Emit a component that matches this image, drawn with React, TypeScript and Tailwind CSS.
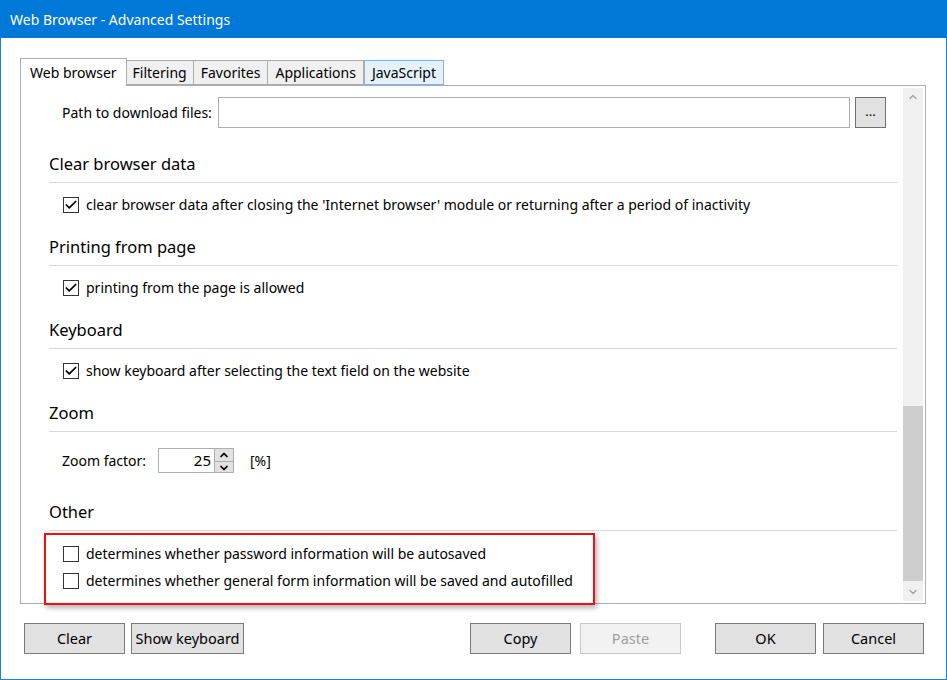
import { Check, ChevronUp, ChevronDown } from 'lucide-react'

const font = { fontFamily: '"Noto Sans", "Open Sans", sans-serif' }

function CheckBox({ checked, label }: { checked?: boolean; label: string }) {
  return (
    <div className="flex items-center h-[24px] gap-[7px] ml-[14px]">
      <span className="w-[16px] h-[16px] border border-[#333333] bg-white flex items-center justify-center">
        {checked && <Check size={14} strokeWidth={3} color="#000" />}
      </span>
      <span className="text-[14px] text-black leading-none">{label}</span>
    </div>
  )
}

function Section({ title, children, rowGap = 'mt-[10px]' }: { title: string; children: React.ReactNode; rowGap?: string }) {
  return (
    <div>
      <div className="h-[26px] flex items-center text-[16.5px] text-black">{title}</div>
      <div className="mt-[5px] h-px bg-[#d9d9d9]" />
      <div className={rowGap}>{children}</div>
    </div>
  )
}

function Button({ label, w, disabled }: { label: string; w: string; disabled?: boolean }) {
  return (
    <button
      className={`${w} h-[31px] text-[14.5px] border ${
        disabled ? 'bg-[#f2f2f2] border-[#c8c8c8] text-[#a0a0a0]' : 'bg-[#e1e1e1] border-[#7a7a7a] text-black'
      }`}
    >
      {label}
    </button>
  )
}

export default function App() {
  return (
    <div className="w-[947px] h-[680px] bg-white border border-[#1883d7] border-t-0 flex flex-col" style={font}>
      <div className="h-[38px] -mx-px bg-[#0078d7] text-white text-[14px] flex items-center pl-[10px]">
        Web Browser - Advanced Settings
      </div>

      <div className="ml-[19px] mr-[20px] mt-[19px] flex flex-col">
        <div className="flex items-end h-[28px] text-[14px] text-black">
          <div className="h-[28px] px-[9px] flex items-center bg-white border border-[#adadad] border-b-0 relative z-10 -mb-px pb-px">
            Web browser
          </div>
          <div className="h-[25px] px-[6px] flex items-center bg-[#f0f0f0] border border-[#adadad] border-l-0">Filtering</div>
          <div className="h-[25px] px-[7px] flex items-center bg-[#f0f0f0] border border-[#adadad] border-l-0">Favorites</div>
          <div className="h-[25px] px-[7px] flex items-center bg-[#f0f0f0] border border-[#adadad] border-l-0">Applications</div>
          <div className="h-[25px] px-[7px] flex items-center bg-[#e5f1fb] border border-[#7eb4ea] border-l-[#adadad]">JavaScript</div>
        </div>

        <div className="h-[519px] border border-[#adadad] flex">
          <div className="flex-1 pl-[28px] pr-[6px] pt-[11px]">
            <div className="flex items-center h-[31px] ml-[13px] text-[14px]">
              <span className="w-[156px]">Path to download files:</span>
              <div className="w-[632px] h-[31px] border border-[#adadad] bg-white" />
              <div className="ml-[5px] w-[31px] h-[31px] border border-[#707070] bg-[#e1e1e1] flex items-center justify-center text-[13px] leading-none pb-[2px]">
                ...
              </div>
            </div>

            <div className="mt-[23px] flex flex-col gap-[17px]">
              <Section title="Clear browser data">
                <CheckBox checked label="clear browser data after closing the 'Internet browser' module or returning after a period of inactivity" />
              </Section>
              <Section title="Printing from page">
                <CheckBox checked label="printing from the page is allowed" />
              </Section>
              <Section title="Keyboard">
                <CheckBox checked label="show keyboard after selecting the text field on the website" />
              </Section>
              <Section title="Zoom" rowGap="mt-[16px]">
                <div className="flex items-center h-[24px] ml-[13px] text-[14px]">
                  <span className="w-[96px]">Zoom factor:</span>
                  <div className="w-[76px] h-[25px] border border-[#adadad] flex">
                    <span className="flex-1 text-right pr-[3px] text-[15px] leading-[23px]">25</span>
                    <div className="w-[19px] flex flex-col border-l border-[#adadad] bg-[#e1e1e1]">
                      <span className="flex-1 flex items-center justify-center border-b border-[#adadad]">
                        <ChevronUp size={12} strokeWidth={3.5} color="#000" />
                      </span>
                      <span className="flex-1 flex items-center justify-center">
                        <ChevronDown size={12} strokeWidth={3.5} color="#000" />
                      </span>
                    </div>
                  </div>
                  <span className="ml-[16px]">[%]</span>
                </div>
              </Section>
              <div className="mt-[10px]">
                <div className="h-[26px] flex items-center text-[16.5px] text-black">Other</div>
                <div className="mt-[5px] h-px bg-[#d9d9d9]" />
                <div className="-ml-[5px] mt-[2px] w-[551px] h-[72px] border-2 border-[#ee1111] shadow-[2px_3px_5px_rgba(0,0,0,0.3)] flex flex-col pt-[7px] gap-[3px]">
                  <div className="ml-[3px]">
                    <CheckBox label="determines whether password information will be autosaved" />
                  </div>
                  <div className="ml-[3px]">
                    <CheckBox label="determines whether general form information will be saved and autofilled" />
                  </div>
                </div>
              </div>
            </div>
          </div>

          <div className="w-[20px] mt-[2px] mb-[2px] mr-[2px] bg-[#f0f0f0] flex flex-col">
            <div className="h-[18px] flex items-center justify-center">
              <ChevronUp size={12} strokeWidth={2.5} color="#a0a0a0" />
            </div>
            <div className="flex-1 flex flex-col justify-end pb-[2px]">
              <div className="h-[175px] bg-[#cdcdcd]" />
            </div>
            <div className="h-[18px] flex items-center justify-center">
              <ChevronDown size={12} strokeWidth={2.5} color="#a0a0a0" />
            </div>
          </div>
        </div>
      </div>

      <div className="mt-[19px] ml-[23px] mr-[22px] flex items-center">
        <Button label="Clear" w="w-[101px]" />
        <div className="ml-[6px]">
          <Button label="Show keyboard" w="w-[113px]" />
        </div>
        <div className="ml-auto flex items-center">
          <Button label="Copy" w="w-[101px]" />
          <div className="ml-[9px]">
            <Button label="Paste" w="w-[101px]" disabled />
          </div>
          <div className="ml-[34px]">
            <Button label="OK" w="w-[101px]" />
          </div>
          <div className="ml-[7px]">
            <Button label="Cancel" w="w-[101px]" />
          </div>
        </div>
      </div>
    </div>
  )
}
